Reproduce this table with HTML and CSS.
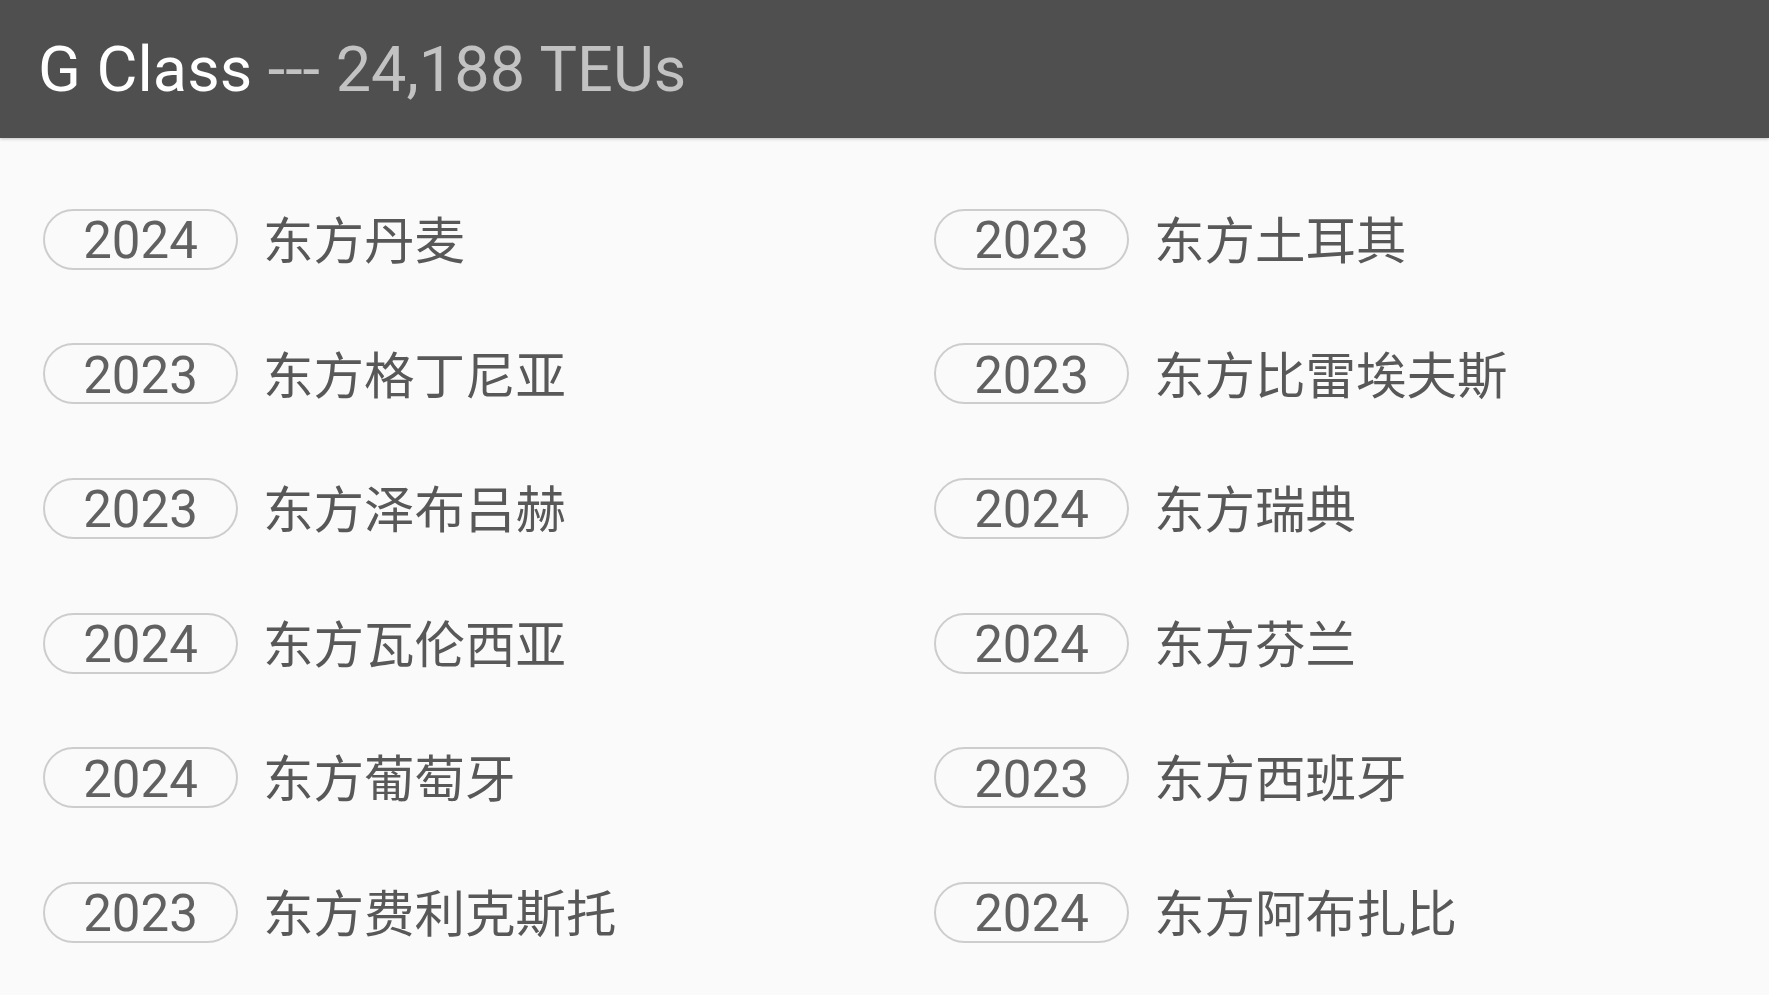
FILE: index.html
```html
<!DOCTYPE html>
<html lang="zh">
<head>
<meta charset="utf-8">
<title>G Class</title>
<link rel="stylesheet" href="styles.css">
</head>
<body>
<header class="bar">
  <h1 class="title"><span class="title-main">G Class</span><span class="title-sub"> --- 24,188 TEUs</span></h1>
</header>
<main class="list">
  <div class="item"><span class="year">2024</span><span class="name">东方丹麦</span></div>
  <div class="item"><span class="year">2023</span><span class="name">东方土耳其</span></div>
  <div class="item"><span class="year">2023</span><span class="name">东方格丁尼亚</span></div>
  <div class="item"><span class="year">2023</span><span class="name">东方比雷埃夫斯</span></div>
  <div class="item"><span class="year">2023</span><span class="name">东方泽布吕赫</span></div>
  <div class="item"><span class="year">2024</span><span class="name">东方瑞典</span></div>
  <div class="item"><span class="year">2024</span><span class="name">东方瓦伦西亚</span></div>
  <div class="item"><span class="year">2024</span><span class="name">东方芬兰</span></div>
  <div class="item"><span class="year">2024</span><span class="name">东方葡萄牙</span></div>
  <div class="item"><span class="year">2023</span><span class="name">东方西班牙</span></div>
  <div class="item"><span class="year">2023</span><span class="name">东方费利克斯托</span></div>
  <div class="item"><span class="year">2024</span><span class="name">东方阿布扎比</span></div>
</main>
</body>
</html>
```

FILE: styles.css
```css
html, body {
  margin: 0;
  padding: 0;
}
body {
  background: #fafafa;
  font-family: Roboto, "Noto Sans CJK SC", sans-serif;
  width: 1769px;
  height: 995px;
  overflow: hidden;
}
.bar {
  height: 138px;
  background: #4f4f4f;
  display: flex;
  align-items: center;
  padding-left: 38px;
  box-shadow: 0 1px 3px rgba(0, 0, 0, 0.22);
  position: relative;
  z-index: 1;
}
.title {
  margin: 0;
  font-weight: 400;
  font-size: 63px;
  line-height: 1;
  padding-top: 1px;
}
.title-main {
  color: #ffffff;
}
.title-sub {
  color: #c2c2c2;
}
.list {
  display: grid;
  grid-template-columns: 891px 1fr;
  grid-auto-rows: 134.6px;
  padding-top: 34px;
  padding-left: 43px;
}
.item {
  display: flex;
  align-items: center;
  gap: 25px;
}
.year {
  box-sizing: border-box;
  width: 195px;
  height: 61px;
  border: 2px solid #cdcdcd;
  border-radius: 31px;
  display: flex;
  align-items: center;
  justify-content: center;
  font-family: Roboto, sans-serif;
  font-size: 51px;
  color: #616161;
  line-height: 1;
  padding-top: 3px;
}
.name {
  font-family: "Noto Sans CJK SC", sans-serif;
  font-size: 50.5px;
  color: #585858;
  line-height: 1;
  padding-bottom: 4px;
}
```
